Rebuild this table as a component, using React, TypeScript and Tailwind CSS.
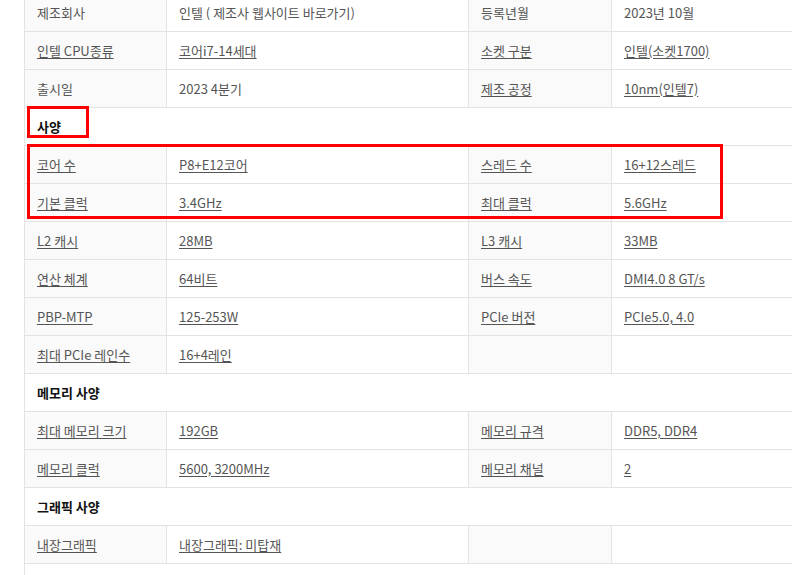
const rows: (string[] | string)[] = [
  ["제조회사", "인텔 ( 제조사 웹사이트 바로가기)", "등록년월", "2023년 10월"],
  ["인텔 CPU종류", "코어i7-14세대", "소켓 구분", "인텔(소켓1700)"],
  ["출시일", "2023 4분기", "제조 공정", "10nm(인텔7)"],
  "사양",
  ["코어 수", "P8+E12코어", "스레드 수", "16+12스레드"],
  ["기본 클럭", "3.4GHz", "최대 클럭", "5.6GHz"],
  ["L2 캐시", "28MB", "L3 캐시", "33MB"],
  ["연산 체계", "64비트", "버스 속도", "DMI4.0 8 GT/s"],
  ["PBP-MTP", "125-253W", "PCIe 버전", "PCIe5.0, 4.0"],
  ["최대 PCIe 레인수", "16+4레인", "", ""],
  "메모리 사양",
  ["최대 메모리 크기", "192GB", "메모리 규격", "DDR5, DDR4"],
  ["메모리 클럭", "5600, 3200MHz", "메모리 채널", "2"],
  "그래픽 사양",
  ["내장그래픽", "내장그래픽: 미탑재", "", ""],
  "",
]

// cells that are plain text, not links
const plain = new Set(["제조회사", "출시일", "등록년월", "인텔 ( 제조사 웹사이트 바로가기)", "2023 4분기", "2023년 10월"])

function Cell({ text, label }: { text: string; label: boolean }) {
  return (
    <td className={`h-[38px] border border-[#e3e3e3] px-3 align-middle ${label ? "bg-[#fafafa]" : "bg-white"}`}>
      {text && (plain.has(text) ? (
        <span>{text}</span>
      ) : (
        <a className="underline underline-offset-2 decoration-[#555]">{text}</a>
      ))}
    </td>
  )
}

export default function App() {
  return (
    <div
      className="relative h-[575px] w-[792px] overflow-hidden bg-white text-[13px] text-[#555]"
      style={{ fontFamily: '"Malgun Gothic", "Noto Sans CJK KR", "Noto Sans", sans-serif' }}
    >
      <table className="-mt-[7px] ml-6 w-[860px] table-fixed border-collapse">
        <colgroup>
          <col className="w-[142px]" />
          <col className="w-[302px]" />
          <col className="w-[143px]" />
          <col />
        </colgroup>
        <tbody>
          {rows.map((r, i) =>
            typeof r === "string" ? (
              <tr key={i}>
                <td colSpan={4} className="h-[38px] border border-[#e3e3e3] bg-white px-3 font-bold text-[#111]">
                  {r}
                </td>
              </tr>
            ) : (
              <tr key={i}>
                {r.map((t, j) => (
                  <Cell key={j} text={t} label={j % 2 === 0} />
                ))}
              </tr>
            )
          )}
        </tbody>
      </table>

      {/* highlight marks */}
      <div className="absolute left-[27px] top-[106px] h-[32px] w-[62px] border-[3px] border-[#ff0000]" />
      <div className="absolute left-[27px] top-[144px] h-[75px] w-[696px] border-[3px] border-[#ff0000]" />
    </div>
  )
}
